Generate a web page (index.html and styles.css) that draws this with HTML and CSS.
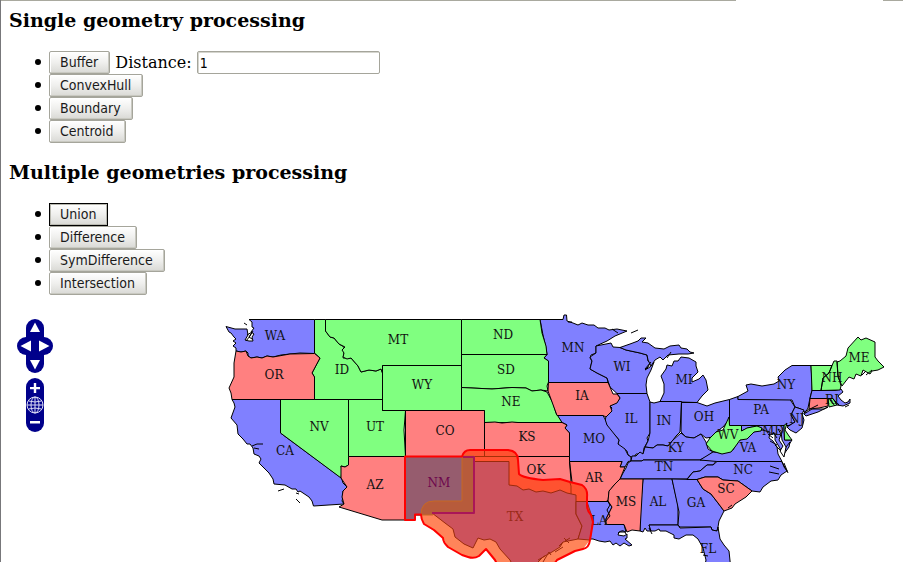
FILE: index.html
```html
<!DOCTYPE html>
<html lang="en">
<head>
<meta charset="utf-8">
<title>Geometry processing</title>
<link rel="stylesheet" href="styles.css">
</head>
<body>
<div class="frame-top"></div>
<main class="page">
  <h3>Single geometry processing</h3>
  <ul>
    <li><button type="button">Buffer</button> <label for="distance">Distance:</label> <input id="distance" type="text" value="1"></li>
    <li><button type="button">ConvexHull</button></li>
    <li><button type="button">Boundary</button></li>
    <li><button type="button">Centroid</button></li>
  </ul>
  <h3>Multiple geometries processing</h3>
  <ul>
    <li><button type="button" class="active">Union</button></li>
    <li><button type="button">Difference</button></li>
    <li><button type="button">SymDifference</button></li>
    <li><button type="button">Intersection</button></li>
  </ul>
  <div class="map">
    <svg class="states" viewBox="9 311 894 251" preserveAspectRatio="xMinYMin slice" role="img" aria-label="Map of the states">
      <g class="blue">
        <path d="M249 319.5H314.500V353.500L300 353 290 354 281 355 273 357 267 356 262 358 257 357 251 358 248 356 248 353 246 351 241 352 236 351 236 348 233 346 236 343 233 341 236 339 234 337 231 333 229 332 226 326.500 235 329 247 329 248 335 245 340 249 341 253 341 252 337 254 334 251 332 254 328 252 327 252 322Z"/>
        <path d="M232 399.500H280.500V433L341.500 478 343 483 347 487 343 491 343 497 342 501 344 504 313.500 506 312 501 309 497 300 491 298 492 296 489 292 489 285 485 274 484 273 479 269 473 259 463 261 459 259 456 254 454 253 448 250 444 247 444 243 439 238 434 237 425 231 418 235 407 234 403Z"/>
        <path d="M540 319.500H563L564 315H566.500L567 321 573 323 578 325 582 323 588 325 594 325 598 328 605 328 609 330 617 329 627 331 615 336 607 341 596 346 596 353 591 355 590 358 592 361 590 369 597 373 607 378 608 382.500H548.500V361L544 358 547 354.500 546 348 543 335Z"/>
        <path d="M596 346 611 343 613 347 620 347.500 626 350 640 353 647 355 648 361 650 363 648 367 645 370 650 367 654 362 651 370 647 378 646 385 647 393.500H617L610 387 608 381 607 378 597 373 590 369 592 361 590 357 596 353Z"/>
        <path d="M620 347.500 630 344 638 341 641 338 646 338 642 342 648 343 655 348 664 349 670 346 679 345 681 348 687 349 690 352 694 353 688 354 679 354 668 355 663 360 660 357 655 360 651 366 648 360 647 355 640 353 626 350Z"/>
        <path d="M660 401.500 664 393 664 384 661 376 666 369 667 365 672 366 674 361 678 361 681 357 689 358 696 362 696 366 698 372 692 378 692 382 699 379 703 375 706 380 708 390 702 396 697 402.500Z"/>
        <path d="M617 393.500H647L650 402V433L647 438 648 441 644 448 643 454 636 454 635 456 631 457 628 455 627 451 620 447 618 444 619 440 615 435 610 432 605 422 606 416 612 408 610 406 617 402 620 398Z"/>
        <path d="M650 402 654 403 660 401.500H681.500L680 432 676 436 673 440 668 446 663 445 657 445 653 448 645 447 648 441 650 433Z"/>
        <path d="M681.500 402.500H697L707 406 715 403 729.500 399.500V417L728 421 723 427 716 432 713 437 706 438 701 434 694 438 686 437 681 432Z"/>
        <path d="M557 415.500H603L605 419 607 425 615 435 619 440 618 444 625 449 628 455 631 457 631 461 628 461.500 625 467H620L622 461.500H569.500V433L565 428 567 425 562 422.500Z"/>
        <path d="M631 461 632 456 636 456 640 452 643 454 645 447 653 448 657 445 663 445 668 446 673 440 681 433 686 437 694 438 701 434 706 442 708 449 713 452 706 457 700 460 643 460 642 461Z"/>
        <path d="M631 461H642L643 460H717L713 465 707 465 700 471 693 472 687 479H620L623 473 626 468 628 463Z"/>
        <path d="M643 479H672L678 505V525H649L651 531 647 531 645 528 643 532 640 531V510Z"/>
        <path d="M672 479 697 479.500 703 489 711 494 718 503 724 511 719 521 718 527 717 531 712 530 711 527 680 527 678 525 679 512Z"/>
        <path d="M649 525H678L680 528 711 527 712 530 717 531 718 527 720 539 724 545 729 551 731 570H704L706 560 703 548 698 539 693 535 686 535 679 539 674 538 674 535 666 531 660 531 659 529 655 531 651 531Z"/>
        <path d="M572 501.500H608L612 507 606 519 606 524.500H624L626 532 619 532 618 535 624 536 627 534 627 538 625 539 632 545 629 546 624 543 620 546 616 543 613 545 610 541 605 542 599 541 593 539 578 539 582 526 576 514Z"/>
        <path d="M729.500 399.500 738 396.500V399.500H790L795 407 791 415 795 422 789 425.500H729.500Z"/>
        <path d="M738 396.500 748 391 746 385 751 384 762 386 774 384 779 381 778 377 785 370 792 365.500H811L812 382 812 390 810 398 808 408 805 413 801 409 795 407 792 400 738 399.500Z"/>
        <path d="M804 414 812 409 824 409 828 407 818 412 806 416ZM795 407 804 410 802 414 804 420 802 428 796 433 790 430 787 427 795 422 791 415Z"/>
        <path d="M812 390.500H835L841 389 843 392 838 396 841 400 845 403 848 402 850 399 850 403 843 406 837 405 833 398.500H810Z"/>
        <path d="M741.500 425.500H784L784.500 440H792L788 446 782 452 778 445 775 440 775 433 768 435 764 430 757 426 748 428 741.500 431Z"/>
        <path d="M700 460 713 452 722 453 733 450 737 442 753 432 762 430 770 432 769 438 773 441 777 447 778 454 782 461.500H717ZM784 454 786 447 790 442 789 447Z"/>
        <path d="M717 461.500H782L784 467 787 471 781 475 778 480 771 481 763 487 760 492 752 491 738 481 723 480 718 477 705 477 697 479.500H687L693 472 700 471 707 465 713 465Z"/>
      </g>
      <g class="green">
        <path d="M314.500 319.500H325.500V331L330 337 334 338 339 344 344 347 344 353 343 358 351 358 358 366 361 372 369 370 376 371 381 369 382.500 373V399.500H314.500V377L312 373 320 358 314.500 353Z"/>
        <path d="M325.500 319.500H461.500V365.500H382.500V373L381 369 376 371 369 370 361 372 358 366 351 358 347 359 343 357 344 353 342 350 345 347 339 344 334 338 330 337 325.500 331Z"/>
        <path d="M382.500 365.500H461.500V410.500H382.500ZM280.500 399.500H348.500V465L345 467 341 466 342 470 341 478 280.500 433ZM348.500 399.500H382.500V410.500H405.500L404 430 405.500 456.500H348.500Z"/>
        <path d="M461.500 319.500H540L542 333 546 346 547 354.500H461.500ZM461.500 354.500H547L544 358 548.500 361V382L547 386 548 391 541 390 532 391 526 388 512 387.500 492 389 461.500 387.500Z"/>
        <path d="M461.500 387.500 492 389 512 387.500 526 388 532 391 541 390 547 392 553 403 556 413 562 422.500H484.500V410.500H461.500Z"/>
        <path d="M729 417 729.500 425.500H741.500V431L747 428 757 426 762 428 761 431 754 432 747 439 740 440 735 447 731 452 722 454 712 451 706 444 710 438 716 432 723 430Z"/>
        <path d="M811 365.500H832L829 373 823 378 821 390.500H812ZM832 365.500 834 361H837L838 375 841 386 840 390 821 390.500 823 378 829 373ZM837 362 840 361 846 356 848 348 858 337 861 340 866 338 875 342V357L878 361 884 367 878 370 872 371 870 374 863 370 861 376 856 374 854 379 849 377 842 386 838 377Z"/>
        <path d="M828 398.500H833L837 405 829 407ZM784 425.500 787 423 785 430 789 436 792 440H784.500Z"/>
      </g>
      <g class="red">
        <path d="M236 351 241 352 246 351 248 356 251 358 257 357 262 358 267 356 273 357 290 354 314.500 353.500 320 358 312 373 314.500 377V399.500H232L231 393 229 388 234 377 234 363Z"/>
        <path d="M548.500 382.500H608L610 387 613 394 617 394 620 398 617 403 610 406 612 411 606 417 603 415.500H557L548 391Z"/>
        <path d="M405.500 410.500H484.500V456.500H405.500ZM484.500 422.500 495 422 502 423 512 422 518 422.500H562L567 425 565 428 569.500 433V456.500H484.500Z"/>
        <path d="M348.500 456.500H405.500V520H382L339 507 344 504 342 497 343 491 347 487 341 478 341 466 345 467 348.500 465ZM405.500 456.500H474V513H432L433 515H415V520H405.500Z"/>
        <path d="M474 456.500H569.500V461.500L572 494 541 492 510 485 509 461.500H474ZM569.500 461.500H622L620 467H625L620 479 614 485 609 492 608 501.500H572V482Z"/>
        <path d="M620 479H643L640 531 632 530 627 532 624 524.500H606L606 519 612 507 608 501 609 491 615 484Z"/>
        <path d="M697 479.500 705 477 718 477 723 480 738 481 752 491 746 497 735 504 732 508 724 511 718 503 711 494 703 489ZM810 398.500H828V406L819 408 809 409Z"/>
      </g>
      <path class="water" d="M778 429 781 434 779 440 783 446 780 451 784 457 786 447 782 440 781 431Z"/>
      <path class="coast" d="M247 335 252 332 249 337 252 339M246 341 250 336 253 331M244 323 247 325M252 446 257 444 263 444M254 448 259 449M278 491 284 489M296 493 299 494M296 499 300 503M607 500 610 505 607 510 610 516 605 522M631 333 638 330M645 369 651 362M618 533Q624 528 626 534M768 434 773 438M770 441 777 445M773 432 777 438M775 445 781 451M782 462 787 471M784 463 788 473M770 466 779 469M769 472 779 474M830 400 835 406M833 399 839 405M845 407 849 405M804 412 818 405M728 508 732 505M703 555 708 556M612 329 618 333M568 322 572 322M649 528 652 534M667 358 671 352M862 375 866 371M866 375 872 370"/>
      <g class="labels">
        <text x="275" y="340">WA</text><text x="274" y="379">OR</text><text x="342" y="374">ID</text><text x="398" y="344">MT</text>
        <text x="422" y="389">WY</text><text x="503" y="339">ND</text><text x="506" y="374">SD</text><text x="511" y="406">NE</text>
        <text x="573" y="352">MN</text><text x="582" y="400">IA</text><text x="622" y="371">WI</text><text x="684" y="384">MI</text>
        <text x="319" y="431">NV</text><text x="375" y="431">UT</text><text x="285" y="455">CA</text><text x="375" y="489">AZ</text>
        <text x="445" y="435">CO</text><text x="527" y="441">KS</text><text x="536" y="474">OK</text><text x="594" y="443">MO</text>
        <text x="594" y="482">AR</text><text x="599" y="525">LA</text><text x="626" y="506">MS</text><text x="658" y="506">AL</text>
        <text x="696" y="507">GA</text><text x="708" y="553">FL</text><text x="726" y="493">SC</text><text x="743" y="474">NC</text>
        <text x="664" y="471">TN</text><text x="676" y="452">KY</text><text x="748" y="452">VA</text><text x="728" y="439">WV</text>
        <text x="631" y="423">IL</text><text x="664" y="425">IN</text><text x="704" y="421">OH</text><text x="761" y="414">PA</text>
        <text x="786" y="389">NY</text><text x="797" y="423">NJ</text><text x="773" y="435">MD</text><text x="832" y="382">NH</text>
        <text x="832" y="404">RI</text><text x="859" y="362">ME</text>
      </g>
      <path class="buffer-sea" d="M415 514H421L422 522 443 538 448 547 462 555 473 558 479 556 486 549 495 560 500 570H550L557 560 575 551 583 549 590 540 593 520 587 505 560 490 440 500Z"/>
      <path class="buffer-land" d="M462 456Q463 450 470 450H508Q518 451 518 460L519 474Q523 478 543 480L560 479 582 485Q588 489 587 502H572L540 500 462 501Z"/>
      <path class="grid" d="M484.500 450V456.500M474 456.500H518M569.500 481 571 486 571 494M576 501.500H587"/>
      <path class="state-tx" d="M474 461.500H509V485L517 486 523 490 529 489 536 492 543 491 551 493 560 490 567 493 576 495V514L582 526 580 533 578 539 568 541 563 542 560 547 552 552 543 557 538 562 536 570H515L510 560 500 549 496 542 490 539 484 540 478 538 473 548 464 544 455 537 453 529 445 523 432 513H474Z"/>
      <path class="state-la" d="M576 501.500H587L593 520 590 540 578 539 582 526 576 514Z"/>
      <path class="bay" d="M538 560 545 556M543 562 549 552 551 555M555 552 563 547M564 538 569 543M565 541 570 538M559 546 563 542"/>
      <path class="state-nm" d="M405 456H474V513H432L433 515H415V520H405Z"/>
      <path class="overlap" d="M462 456H474V513H432L433 515H421Q421 501 434 501H462Z"/>
      <path class="nm-edge" d="M463 457H474V513H432"/>
      <path class="result" d="M405 456.500H462Q464 450 470 450H508Q518 451 518 460L519 474Q523 478 543 480L560 479 570 482 582 485Q588 489 587 497V505Q587 511 591 515L593 522 590 540Q589 548 583 549L575 551 557 560 550 570H500L495 560 486 549 479 556Q474 559 468 557L462 555 448 547Q443 542 443 538L434 530 424 524Q421 519 421 514.500H415V520H405Z"/>
      <text class="label-nm" x="439" y="487">NM</text>
      <text class="label-tx" x="515" y="521">TX</text>
    </svg>
    <div class="controls">
      <div class="pan">
        <button type="button" class="up" aria-label="Pan up"><svg viewBox="0 0 18 18"><path d="M9 3.500 14 13H4Z"/></svg></button>
        <div class="pan-row">
          <button type="button" class="left" aria-label="Pan left"><svg viewBox="0 0 18 18"><path d="M3.500 9 14 3.500V14.500Z"/></svg></button>
          <button type="button" class="right" aria-label="Pan right"><svg viewBox="0 0 18 18"><path d="M14.500 9 4 3.500V14.500Z"/></svg></button>
        </div>
        <button type="button" class="down" aria-label="Pan down"><svg viewBox="0 0 18 18"><path d="M4 5H14L9 14.500Z"/></svg></button>
      </div>
      <div class="zoom">
        <button type="button" class="up" aria-label="Zoom in"><svg viewBox="0 0 18 18"><path d="M7.800 5H10.200V9H14V11.300H10.200V15H7.800V11.300H4V9H7.800Z"/></svg></button>
        <button type="button" aria-label="Zoom to full extent"><svg viewBox="0 0 18 18"><g class="globe"><circle cx="9" cy="9" r="8"/><ellipse cx="9" cy="9" rx="4" ry="8"/><path d="M9 1V17M1 9H17M2.500 5Q9 7 15.500 5M2.500 13Q9 11 15.500 13"/></g></svg></button>
        <button type="button" class="down" aria-label="Zoom out"><svg viewBox="0 0 18 18"><path d="M4 7H14V9.500H4Z"/></svg></button>
      </div>
    </div>
  </div>
</main>
</body>
</html>
```
FILE: styles.css
```css
* { box-sizing: border-box; }

html { background: #fff; }

body {
  margin: 0;
  min-height: 100vh;
  overflow: hidden;
  border-left: 1px solid #77777a;
  color: #000;
  font-family: "DejaVu Serif", serif;
  font-size: 16px;
}

.frame-top {
  height: 1px;
  background: linear-gradient(to right, #a9a99f 81.5%, #fff 81.5%, #fff 97.8%, #a9a99f 97.8%);
}

.page { padding: 8px 0 0 8px; }

h3 {
  margin: 0 0 20px;
  font-size: 19px;
  line-height: 22px;
}

ul {
  margin: 0 0 18px;
  padding-left: 26px;
  list-style: none;
}

li { height: 23px; line-height: 23px; }

li::before {
  content: "";
  display: inline-block;
  width: 6px;
  height: 6px;
  margin: 8px 8px 0 0;
  border-radius: 3px;
  background: #000;
  vertical-align: top;
}

li button,
li input {
  height: 23px;
  border: 1px solid #a5a59b;
  border-radius: 2px;
  font: 14px "DejaVu Sans Condensed", sans-serif;
  vertical-align: top;
}

li button {
  padding: 0 11px 1px 10px;
  background: linear-gradient(#fff, #efefed 50%, #d9d9d5);
  box-shadow: inset -1px -1px #c9c9c1, inset 1px 1px #fff;
  color: #1a1a1a;
}

li button.active {
  border-color: #000;
  border-radius: 0;
  box-shadow: inset 0 0 0 1px #b9b9b0;
}

li input {
  width: 183px;
  padding: 0 2px;
  background: #fff;
  box-shadow: inset 1px 1px #d5d5ce;
}

.map {
  position: relative;
  margin-top: -2px;
}

.states {
  display: block;
  width: 100%;
}

.states path {
  stroke: #000;
  stroke-width: 1;
  stroke-linejoin: round;
}

.blue { fill: #8080ff; }
.green { fill: #80ff80; }
.red { fill: #ff8080; }

.states .water { fill: #fff; }
.states .coast { fill: none; }

.states text {
  font-size: 12px;
  text-anchor: middle;
}

.labels { fill: #111; }

.states .buffer-sea { fill: #ff845a; stroke: none; }
.states .buffer-land { fill: #ff5230; stroke: none; }
.states .grid { fill: none; stroke: #a62f08; }
.states .state-tx { fill: #cd525c; stroke: #9b2a0c; }
.states .state-la { fill: #c54c61; stroke: #9b2a0c; }
.states .bay { fill: none; stroke: #9b2a0c; }
.states .state-nm { fill: #965c6e; stroke: none; }
.states .overlap { fill: #b75b3b; stroke: #c76825; }
.states .nm-edge { fill: none; stroke: #aa1658; stroke-width: 2; }
.states .result { fill: none; stroke: #f00; stroke-width: 2; }
.label-nm { fill: #6d074d; }
.label-tx { fill: #9b2a18; }

.controls {
  position: absolute;
  top: 8px;
  left: 8px;
  display: flex;
  flex-direction: column;
  align-items: center;
  gap: 5px;
}

.pan,
.zoom {
  display: flex;
  flex-direction: column;
  align-items: center;
}

.pan-row { display: flex; }

.controls button {
  display: block;
  width: 18px;
  height: 18px;
  padding: 0;
  border: 0;
  background: #00008b;
}

.controls svg {
  display: block;
  fill: #fff;
}

.controls .up { border-radius: 9px 9px 0 0; }
.controls .down { border-radius: 0 0 9px 9px; }
.controls .left { border-radius: 9px 0 0 9px; }
.controls .right { border-radius: 0 9px 9px 0; }

.globe {
  fill: none;
  stroke: #dcdcf5;
  stroke-width: 1;
}
```
